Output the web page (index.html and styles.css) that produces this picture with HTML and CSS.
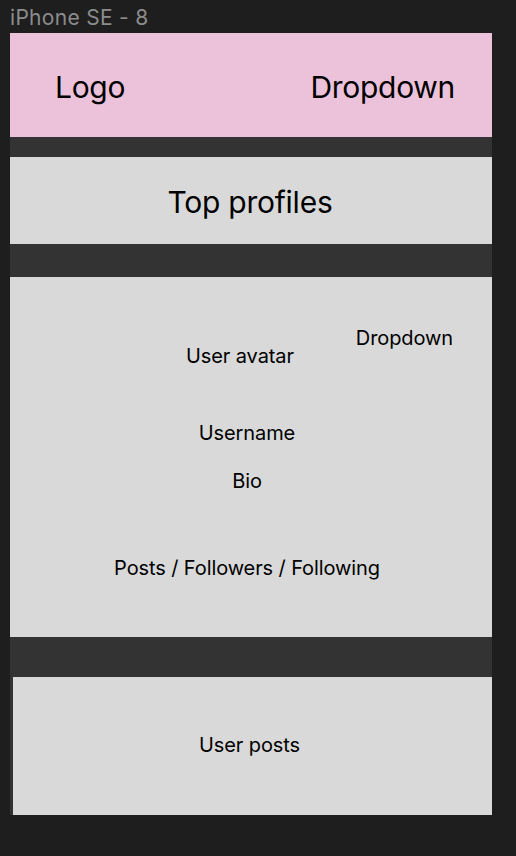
FILE: index.html
```html
<!DOCTYPE html>
<html lang="en">
<head>
<meta charset="utf-8">
<title>iPhone SE - 8</title>
<link rel="stylesheet" href="styles.css">
</head>
<body>
  <div class="frame-label">iPhone SE - 8</div>
  <main class="frame">
    <header class="topbar">
      <span class="logo">Logo</span>
      <span class="dropdown">Dropdown</span>
    </header>
    <section class="top-profiles">Top profiles</section>
    <section class="profile">
      <div class="profile-top">
        <span class="avatar">User avatar</span>
        <span class="profile-dropdown">Dropdown</span>
      </div>
      <div class="profile-info">
        <span class="username">Username</span>
        <span class="bio">Bio</span>
        <span class="stats">Posts / Followers / Following</span>
      </div>
    </section>
    <section class="posts">User posts</section>
  </main>
</body>
</html>
```

FILE: styles.css
```css
* {
  box-sizing: border-box;
}

html, body {
  margin: 0;
  padding: 0;
}

body {
  background: #1e1e1e;
  font-family: Inter, "Noto Sans", "Liberation Sans", sans-serif;
  color: #000;
  width: 516px;
  height: 856px;
  overflow: hidden;
}

.frame-label {
  height: 33px;
  padding: 5px 0 0 10px;
  font-size: 21px;
  line-height: 25px;
  letter-spacing: 0.3px;
  color: #8c8c8c;
}

.frame {
  margin-left: 10px;
  width: 482px;
  height: 782px;
  background: #333333;
  display: flex;
  flex-direction: column;
}

.topbar {
  height: 104px;
  flex: none;
  background: #ecc2da;
  display: flex;
  align-items: center;
  justify-content: space-between;
  padding: 4px 37px 0 45px;
  font-size: 30px;
  line-height: 36px;
  letter-spacing: -0.3px;
}

.top-profiles {
  margin-top: 20px;
  height: 87px;
  flex: none;
  background: #d9d9d9;
  display: flex;
  align-items: center;
  justify-content: center;
  padding: 2px 2px 0 0;
  font-size: 30px;
  line-height: 36px;
  letter-spacing: -0.25px;
}

.profile {
  margin-top: 33px;
  height: 360px;
  flex: none;
  background: #d9d9d9;
  display: flex;
  flex-direction: column;
  padding-top: 49px;
  font-size: 20px;
  line-height: 24px;
  letter-spacing: -0.1px;
}

.profile-top {
  display: flex;
  align-items: flex-start;
  justify-content: space-between;
  padding: 0 39px 0 176px;
}

.avatar {
  margin-top: 18px;
}

.profile-info {
  display: flex;
  flex-direction: column;
  align-items: center;
  padding-right: 8px;
  margin-top: 53px;
}

.bio {
  margin-top: 24px;
}

.stats {
  margin-top: 63px;
}

.posts {
  margin-top: 40px;
  margin-left: 3px;
  height: 138px;
  flex: none;
  background: #d9d9d9;
  display: flex;
  align-items: center;
  justify-content: center;
  padding: 0 6px 3px 0;
  font-size: 20px;
  line-height: 24px;
  letter-spacing: -0.1px;
}
```
